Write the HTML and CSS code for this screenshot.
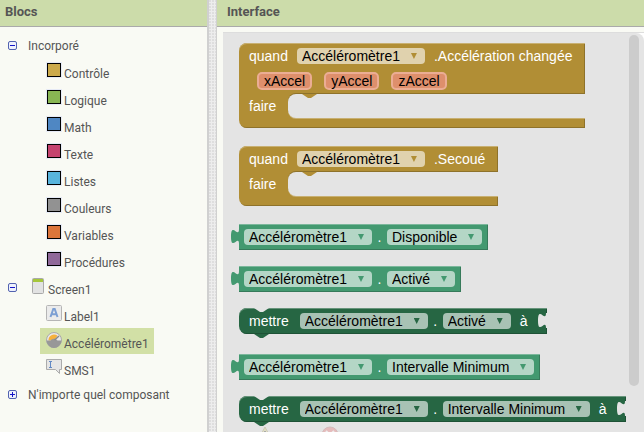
FILE: index.html
```html
<!DOCTYPE html>
<html lang="fr">
<head>
<meta charset="utf-8">
<title>Blocs</title>
<link rel="stylesheet" href="styles.css">
</head>
<body>
<svg class="defs" aria-hidden="true">
  <symbol id="notch" viewBox="0 0 15 5"><path d="M0 0L6 4H9L15 0Z" fill="currentColor"/></symbol>
  <symbol id="tab" viewBox="0 0 9 15"><path d="M9 0H8C8 10 0 -8 0 7.5S8 5 8 15H9Z" fill="currentColor"/></symbol>
</svg>
<div class="app">
  <nav class="sidebar">
    <h2 class="title">Blocs</h2>
    <ul class="tree">
      <li>
        <div class="branch"><button class="toggle" aria-label="Réduire"></button><a href="#">Incorporé</a></div>
        <ul class="children">
          <li><a class="item" href="#"><span class="swatch control"></span>Contrôle</a></li>
          <li><a class="item" href="#"><span class="swatch logic"></span>Logique</a></li>
          <li><a class="item" href="#"><span class="swatch math"></span>Math</a></li>
          <li><a class="item" href="#"><span class="swatch text"></span>Texte</a></li>
          <li><a class="item" href="#"><span class="swatch lists"></span>Listes</a></li>
          <li><a class="item" href="#"><span class="swatch colors"></span>Couleurs</a></li>
          <li><a class="item" href="#"><span class="swatch variables"></span>Variables</a></li>
          <li><a class="item" href="#"><span class="swatch procedures"></span>Procédures</a></li>
        </ul>
      </li>
      <li>
        <div class="branch screen"><button class="toggle" aria-label="Réduire"></button><a class="item" href="#"><svg class="icon phone" viewBox="0 0 12 16"><rect x=".5" y=".5" width="11" height="15" rx="1" fill="#e2e2e2" stroke="#a9a9a9"/><path d="M1 1H11V4H1Z" fill="#a5c63b"/></svg>Screen1</a></div>
        <ul class="children">
          <li><a class="item" href="#"><svg class="icon" viewBox="0 0 16 16"><rect x=".5" y=".5" width="15" height="15" rx="1" fill="#ebebeb" stroke="#b5b5b5"/><path d="M4.5 12L7.3 4H8.7L11.5 12M5.8 9.3H10.2" fill="none" stroke="#7c9fd3" stroke-width="2"/></svg>Label1</a></li>
          <li><a class="item selected" href="#"><svg class="icon" viewBox="0 0 16 16"><circle cx="8" cy="8" r="7.5" fill="#e7e7e7" stroke="#aaa"/><path d="M2.5 8.5A5.5 5.5 0 0 1 11.5 3.8L9 7 5 8.5Z" fill="#f6b13c"/><path d="M.5 8.5H4.5A4 4 0 0 1 8 6.8 4 4 0 0 1 11.5 8.5H15.5A7.5 7.5 0 0 1 .5 8.5Z" fill="#989898"/><path d="M8.5 8L13 4" stroke="#888" stroke-width="1.5"/></svg>Accéléromètre1</a></li>
          <li><a class="item" href="#"><svg class="icon" viewBox="0 0 16 16"><path d="M.5 .5H15.5V10.5H13.5V14.5L9.5 10.5H.5Z" fill="#e5e5e5" stroke="#ababab"/><path d="M3 2.5H6M3 8.5H6M4.5 2.5V8.5" stroke="#6389c4"/></svg>SMS1</a></li>
        </ul>
      </li>
      <li>
        <div class="branch last"><button class="toggle closed" aria-label="Développer"></button><a href="#">N'importe quel composant</a></div>
      </li>
    </ul>
  </nav>
  <div class="splitter"></div>
  <main class="viewer">
    <h2 class="title">Interface</h2>
    <div class="workspace">
      <div class="flyout">
        <section class="block event">
          <div class="row"><span>quand</span><span class="field"><select aria-label="Composant"><option>Accéléromètre1</option></select></span><span>.Accélération changée</span></div>
          <div class="row args"><span class="arg">xAccel</span><span class="arg">yAccel</span><span class="arg">zAccel</span></div>
          <div class="body"><span class="do">faire</span><div class="mouth"><svg class="notch"><use href="#notch"/></svg></div></div>
        </section>
        <section class="block event">
          <div class="row"><span>quand</span><span class="field"><select aria-label="Composant"><option>Accéléromètre1</option></select></span><span>.Secoué</span></div>
          <div class="body"><span class="do">faire</span><div class="mouth"><svg class="notch"><use href="#notch"/></svg></div></div>
        </section>
        <section class="block getter">
          <svg class="tab"><use href="#tab"/></svg>
          <span class="field"><select aria-label="Composant"><option>Accéléromètre1</option></select></span><span class="dot">.</span><span class="field"><select aria-label="Propriété"><option>Disponible</option></select></span>
        </section>
        <section class="block getter">
          <svg class="tab"><use href="#tab"/></svg>
          <span class="field"><select aria-label="Composant"><option>Accéléromètre1</option></select></span><span class="dot">.</span><span class="field"><select aria-label="Propriété"><option>Activé</option></select></span>
        </section>
        <section class="block setter">
          <svg class="notch"><use href="#notch"/></svg><svg class="notch tongue"><use href="#notch"/></svg>
          <span class="verb">mettre</span><span class="field"><select aria-label="Composant"><option>Accéléromètre1</option></select></span><span class="dot">.</span><span class="field"><select aria-label="Propriété"><option>Activé</option></select></span><span class="to">à</span>
          <svg class="tab socket"><use href="#tab"/></svg>
        </section>
        <section class="block getter spaced">
          <svg class="tab"><use href="#tab"/></svg>
          <span class="field"><select aria-label="Composant"><option>Accéléromètre1</option></select></span><span class="dot">.</span><span class="field"><select aria-label="Propriété"><option>Intervalle Minimum</option></select></span>
        </section>
        <section class="block setter">
          <svg class="notch"><use href="#notch"/></svg><svg class="notch tongue"><use href="#notch"/></svg>
          <span class="verb">mettre</span><span class="field"><select aria-label="Composant"><option>Accéléromètre1</option></select></span><span class="dot">.</span><span class="field"><select aria-label="Propriété"><option>Intervalle Minimum</option></select></span><span class="to">à</span>
          <svg class="tab socket"><use href="#tab"/></svg>
        </section>
        <svg class="indicators" viewBox="0 0 90 18"><path d="M9 1L17 16H1Z" fill="#e2dfc2" stroke="#cbc9b6"/><path d="M9 5V11" stroke="#aaa" stroke-width="2"/><circle cx="74" cy="9" r="8" fill="#e5bcbc" stroke="#d3bcbc"/><path d="M70 5L78 13M78 5L70 13" stroke="#eee" stroke-width="2"/></svg>
        <div class="scrollbar"></div>
      </div>
    </div>
  </main>
</div>
</body>
</html>
```
FILE: styles.css
```css
* { box-sizing: border-box; }

body {
  margin: 0;
  overflow: hidden;
  background: #f9faf4;
  color: #555;
  font: 12px/16px Roboto, sans-serif;
}

ul { margin: 0; padding: 0; list-style: none; }
a { color: inherit; text-decoration: none; }
.defs { display: none; }

.app {
  display: grid;
  grid-template-columns: 207px 10px 1fr;
  grid-template-rows: 100%;
  height: 100vh;
}

.title {
  flex: none;
  height: 27px;
  margin: 0;
  padding: 4px 5px;
  border-bottom: 1px solid #aaa;
  background: #ccdcaa;
  font-size: 13px;
  line-height: 16px;
}

/* Component tree */
.tree { padding-top: 6px; white-space: nowrap; }

.branch {
  display: flex;
  align-items: center;
  gap: 11px;
  height: 25px;
  padding-left: 8px;
}

.branch.screen { height: 27px; }

.toggle {
  position: relative;
  width: 9px;
  height: 9px;
  padding: 0;
  border: 1px solid #5262b0;
  border-radius: 2px;
  background: linear-gradient(#1414c8, #1414c8) center / 5px 1px no-repeat #eef1fc;
}

.toggle.closed {
  background:
    linear-gradient(#1414c8, #1414c8) center / 5px 1px no-repeat,
    linear-gradient(#1414c8, #1414c8) center / 1px 5px no-repeat,
    #eef1fc;
}

.children { padding-left: 40px; }
.children li { height: 27px; }

.item {
  display: inline-flex;
  align-items: flex-start;
  height: 26px;
  padding: 7px 5px 0 6px;
  line-height: 18px;
}

.screen .item { padding: 6px 0 0 4px; }

.selected { background: #d2e0a6; }

.swatch {
  width: 14px;
  height: 14px;
  margin: -2px 3px 0 1px;
  border: 1px solid #000;
  outline: 1px solid #e6eaf6;
}

.control { background: #ccaa4b; }
.logic { background: #88b653; }
.math { background: #4f87c3; }
.text { background: #c5436f; }
.lists { background: #58b4dd; }
.colors { background: #929292; }
.variables { background: #dc753b; }
.procedures { background: #90699a; }

.icon { width: 16px; height: 16px; margin: -3px 2px 0 0; }
.icon.phone { width: 12px; margin-right: 4px; }

.splitter {
  border: solid #d0d0d0;
  border-width: 0 1px 0 2px;
  background: radial-gradient(circle at 1px 1px, #dedede 1px, #ededed 1px) 0 0 / 3px 3px;
}

/* Block drawer */
.viewer { display: flex; flex-direction: column; min-width: 0; }
.viewer .title { padding-left: 10px; }

.workspace {
  flex: 1;
  min-height: 0;
  margin: 5px 0 0 6px;
  border-top: 1px solid #ddd;
  background: #fff;
}

.flyout {
  position: relative;
  display: flex;
  flex-direction: column;
  align-items: flex-start;
  gap: 16px;
  height: 100%;
  padding: 10px 16px 0;
  border-radius: 0 8px 0 0;
  background: #e4e4e4;
  color: #fff;
  font: 14px/16px "Liberation Sans", sans-serif;
  white-space: nowrap;
}

.block {
  position: relative;
  flex: none;
  background: var(--fill);
  box-shadow: inset 0 1px var(--light), inset -1px -1px var(--dark);
}

.event {
  --fill: #b18e35;
  --light: #c8b072;
  --dark: #8e722a;
  --field: #e0d2ae;
  margin-bottom: 2px;
  padding: 5px 0 10px;
  border-radius: 8px 0 0 8px;
}

.getter {
  --fill: #439970;
  --light: #7bb79b;
  --dark: #367a5a;
  --field: #b4d6c6;
}

.setter {
  --fill: #266643;
  --light: #67947b;
  --dark: #1e5236;
  --field: #a8c2b4;
  border-radius: 8px 0 0 8px;
}

.getter, .setter { display: flex; height: 26px; padding: 5px; }
.getter { padding-right: 6px; }
.spaced { margin-top: 4px; }

.row { display: flex; gap: 9px; padding: 0 13px 0 10px; }
.args { gap: 12px; padding: 8px 18px 0; }

.arg {
  height: 18px;
  padding: 0 5px;
  border: 2px solid #ebad94;
  border-radius: 5px;
  background: #de8f6c;
  color: #000;
  line-height: 14px;
}

.body { display: flex; height: 24px; margin-top: 4px; }
.row:first-child + .body { margin-top: 5px; }
.do { width: 49px; padding: 4px 0 0 10px; }

.mouth {
  position: relative;
  flex: 1;
  border-radius: 8px 0 0 8px;
  background: #e4e4e4;
  box-shadow: 0 -1px var(--dark), 0 1px var(--light);
}

.notch { position: absolute; top: 0; left: 14px; width: 15px; height: 5px; color: var(--fill); }
.setter .notch { color: #e4e4e4; left: 15px; }
.setter .tongue { top: 100%; color: var(--fill); }

.tab { position: absolute; top: 5px; left: -8px; width: 9px; height: 15px; color: var(--fill); }
.socket { right: 0; left: auto; color: #e4e4e4; }

.field { position: relative; color: var(--fill); }

.field::after {
  content: "";
  position: absolute;
  top: 5px;
  right: 8px;
  width: 6px;
  height: 6px;
  background: var(--fill);
  clip-path: polygon(0 0, 100% 0, 50% 100%);
  pointer-events: none;
}

select {
  display: block;
  height: 16px;
  margin: 0;
  padding: 0 24px 0 5px;
  border: 0;
  border-radius: 4px;
  appearance: none;
  background: var(--field);
  color: #000;
  font: inherit;
}

.dot { width: 15px; text-align: center; }
.verb { padding: 0 11px 0 5px; }
.to { padding: 0 15px 0 9px; }

.scrollbar {
  position: absolute;
  top: 2px;
  right: 5px;
  width: 10px;
  height: 88%;
  border-radius: 5px;
  background: #ccc;
}

.indicators { flex: none; width: 90px; height: 18px; margin: -12px 0 0 17px; }
```
